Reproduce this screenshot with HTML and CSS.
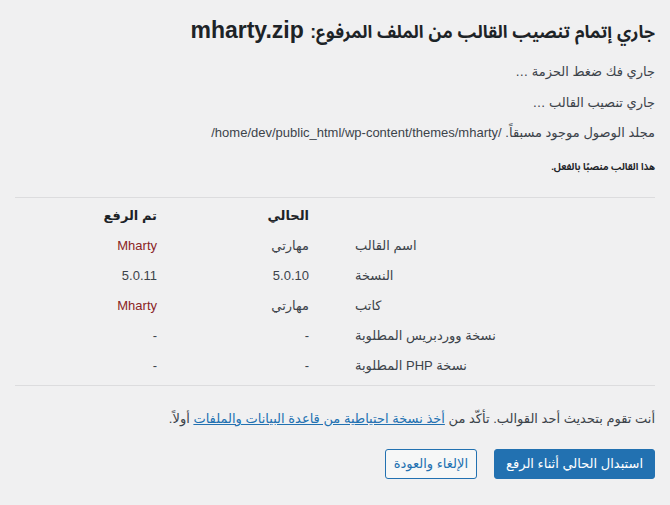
FILE: index.html
```html
<!DOCTYPE html>
<html lang="ar" dir="rtl">
<head>
<meta charset="utf-8">
<link rel="stylesheet" href="styles.css">
</head>
<body>
<div class="wrap">
  <h1 class="title"><span class="title-ar">جاري إتمام تنصيب القالب من الملف المرفوع:</span> mharty.zip</h1>
  <p class="step step-first">جاري فك ضغط الحزمة &hellip;</p>
  <p class="step">جاري تنصيب القالب &hellip;</p>
  <p class="step">مجلد الوصول موجود مسبقاً. /home/dev/public_html/wp-content/themes/mharty/</p>
  <p class="heading">هذا القالب منصبًا بالفعل.</p>
  <div class="compare" role="table">
    <div class="cell head name-label"></div>
    <div class="cell head">الحالي</div>
    <div class="cell head">تم الرفع</div>

    <div class="cell name-label">اسم القالب</div>
    <div class="cell">مهارتي</div>
    <div class="cell changed">Mharty</div>

    <div class="cell name-label">النسخة</div>
    <div class="cell">5.0.10</div>
    <div class="cell">5.0.11</div>

    <div class="cell name-label">كاتب</div>
    <div class="cell">مهارتي</div>
    <div class="cell changed">Mharty</div>

    <div class="cell name-label">نسخة ووردبريس المطلوبة</div>
    <div class="cell">-</div>
    <div class="cell">-</div>

    <div class="cell name-label">نسخة PHP المطلوبة</div>
    <div class="cell">-</div>
    <div class="cell">-</div>
  </div>
  <p class="notice">أنت تقوم بتحديث أحد القوالب. تأكّد من <a href="#">أخذ نسخة احتياطية من قاعدة البيانات والملفات</a> أولاً.</p>
  <div class="actions">
    <a class="button button-primary" href="#">استبدال الحالي أثناء الرفع</a>
    <a class="button button-secondary" href="#">الإلغاء والعودة</a>
  </div>
</div>
</body>
</html>
```

FILE: styles.css
```css
html, body {
  margin: 0;
  padding: 0;
  background: #f0f0f1;
}

body {
  color: #3c434a;
  font-family: "Liberation Sans", "DejaVu Sans", sans-serif;
  font-size: 13px;
  line-height: 18px;
}

.wrap {
  padding: 0 15px;
}

.title {
  margin: 0;
  padding-top: 15px;
  height: 30px;
  font-family: "Liberation Sans", "Noto Sans Arabic", "DejaVu Sans", sans-serif;
  font-size: 23px;
  line-height: 30px;
  font-weight: 700;
  color: #1d2327;
}

.title-ar {
  font-size: 17.5px;
  line-height: 1;
}

.step {
  margin: 12.5px 0 0;
}

.step-first {
  margin-top: 18px;
}

.heading {
  margin: 17px 0 0;
  font-family: "Liberation Sans", "Noto Sans Arabic", "DejaVu Sans", sans-serif;
  font-size: 9.5px;
  line-height: 16px;
  font-weight: 700;
  color: #1d2327;
}

.compare {
  margin-top: 22px;
  width: 640px;
  display: grid;
  grid-template-columns: 323px 152px 165px;
  grid-auto-rows: 30px;
  padding: 3px 0 4px;
  border-top: 1px solid #dcdcde;
  border-bottom: 1px solid #dcdcde;
}

.cell {
  padding: 0 23px;
  line-height: 30px;
  text-align: right;
  white-space: nowrap;
}

.cell.head {
  font-weight: 700;
  color: #1d2327;
}

.cell.name-label {
  text-align: left;
}

.cell.changed {
  color: #8a2424;
}

.notice {
  margin: 24px 0 0;
}

.notice a {
  color: #2271b1;
  text-decoration: underline;
}

.actions {
  margin-top: 21px;
  display: flex;
  gap: 17px;
}

.button {
  display: inline-flex;
  align-items: center;
  height: 30px;
  box-sizing: border-box;
  padding: 0 11px;
  border-radius: 3px;
  border: 1px solid #2271b1;
  text-decoration: none;
  font-size: 13px;
}

.button-primary {
  background: #2271b1;
  color: #fff;
}

.button-secondary {
  padding: 0 8px;
  background: #f6f7f7;
  color: #2271b1;
}
```
